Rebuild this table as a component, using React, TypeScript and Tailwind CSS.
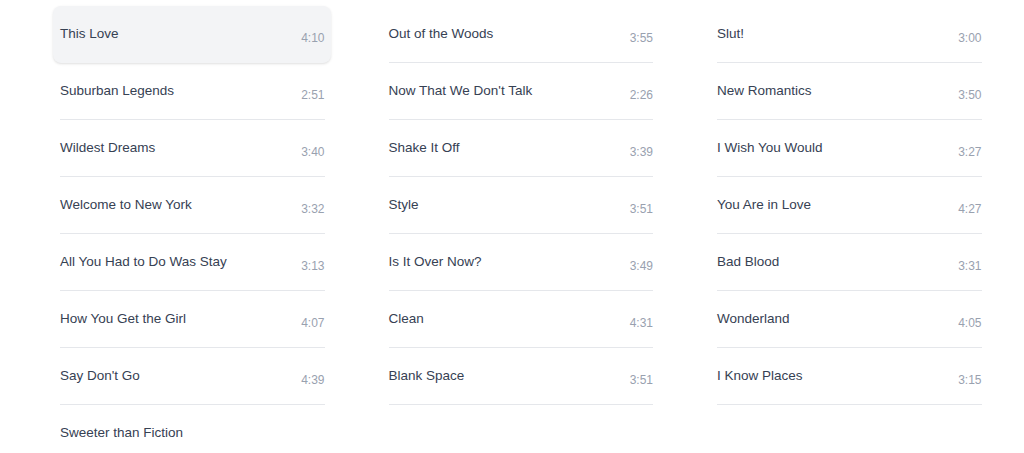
import React from 'react';

interface Track {
  title: string;
  length?: string;
}

const columns: Track[][] = [
  [
    { title: 'This Love', length: '4:10' },
    { title: 'Suburban Legends', length: '2:51' },
    { title: 'Wildest Dreams', length: '3:40' },
    { title: 'Welcome to New York', length: '3:32' },
    { title: 'All You Had to Do Was Stay', length: '3:13' },
    { title: 'How You Get the Girl', length: '4:07' },
    { title: "Say Don't Go", length: '4:39' },
    { title: 'Sweeter than Fiction' },
  ],
  [
    { title: 'Out of the Woods', length: '3:55' },
    { title: "Now That We Don't Talk", length: '2:26' },
    { title: 'Shake It Off', length: '3:39' },
    { title: 'Style', length: '3:51' },
    { title: 'Is It Over Now?', length: '3:49' },
    { title: 'Clean', length: '4:31' },
    { title: 'Blank Space', length: '3:51' },
  ],
  [
    { title: 'Slut!', length: '3:00' },
    { title: 'New Romantics', length: '3:50' },
    { title: 'I Wish You Would', length: '3:27' },
    { title: 'You Are in Love', length: '4:27' },
    { title: 'Bad Blood', length: '3:31' },
    { title: 'Wonderland', length: '4:05' },
    { title: 'I Know Places', length: '3:15' },
  ],
];

const TrackRow: React.FC<{ track: Track; active?: boolean }> = ({ track, active }) => {
  return (
    <div
      className={`flex h-[57px] items-center justify-between border-b border-gray-200 ${
        active ? '-ml-[7px] -mr-[6px] pl-[7px] pr-[6px] rounded-lg bg-gray-100 shadow-sm border-b-gray-100' : ''
      }`}
    >
      <span className="text-[13.5px] text-gray-700">{track.title}</span>
      {track.length && <span className="pt-[8px] text-[12px] text-gray-400">{track.length}</span>}
    </div>
  );
};

export default function App() {
  return (
    <div className="h-[453px] overflow-hidden bg-white font-['Liberation_Sans',Arial,sans-serif]">
      <div className="flex gap-16 pl-[60px] pt-[6px]">
        {columns.map((col, ci) => (
          <div key={ci} className="flex w-[264.5px] flex-col">
            {col.map((track, ti) => (
              <TrackRow key={ti} track={track} active={ci === 0 && ti === 0} />
            ))}
          </div>
        ))}
      </div>
    </div>
  );
}
